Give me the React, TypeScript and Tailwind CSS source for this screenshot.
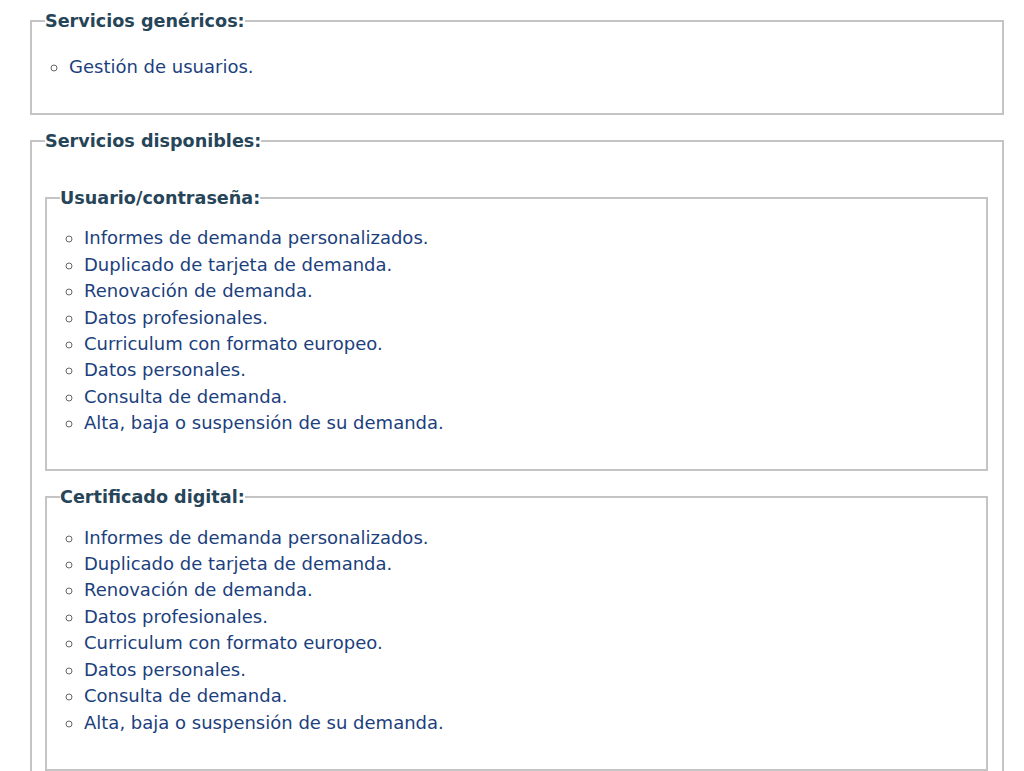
import React from "react";

const services = [
  "Informes de demanda personalizados.",
  "Duplicado de tarjeta de demanda.",
  "Renovación de demanda.",
  "Datos profesionales.",
  "Curriculum con formato europeo.",
  "Datos personales.",
  "Consulta de demanda.",
  "Alta, baja o suspensión de su demanda.",
];

function ItemList({ items }: { items: string[] }) {
  return (
    <ul className="list-[circle] pl-[24px] m-0">
      {items.map((t) => (
        <li key={t} className="text-[18px] leading-[26.4px] text-[#1c3f7d] marker:text-[#666666]">
          <a href="#" className="text-[#1c3f7d] no-underline">
            {t}
          </a>
        </li>
      ))}
    </ul>
  );
}

function Legend({ children }: { children: React.ReactNode }) {
  return (
    <legend className="px-0 leading-[22px] font-bold text-[#274559]">{children}</legend>
  );
}

export default function App() {
  return (
    <div
      className="bg-white min-h-screen pt-[10px] pb-[20px] text-[17.6px]"
      style={{ fontFamily: '"DejaVu Sans", Verdana, sans-serif' }}
    >
      <fieldset className="ml-[30px] mr-[20px] border-2 border-solid border-[#c4c4c4] pt-[22px] pb-[33px] pl-[13px] pr-[14px]">
        <Legend>Servicios genéricos:</Legend>
        <ItemList items={["Gestión de usuarios."]} />
      </fieldset>

      <fieldset className="mt-[15px] ml-[30px] mr-[20px] border-2 border-solid border-[#c4c4c4] pt-[35px] pb-[30px] pl-[13px] pr-[14px]">
        <Legend>Servicios disponibles:</Legend>

        <fieldset className="border-2 border-solid border-[#c4c4c4] pt-[16px] pb-[32px] pl-[13px] pr-[13px]">
          <Legend>Usuario/contraseña:</Legend>
          <ItemList items={services} />
        </fieldset>

        <fieldset className="mt-[15px] border-2 border-solid border-[#c4c4c4] pt-[17px] pb-[33px] pl-[13px] pr-[13px]">
          <Legend>Certificado digital:</Legend>
          <ItemList items={services} />
        </fieldset>
      </fieldset>
    </div>
  );
}
